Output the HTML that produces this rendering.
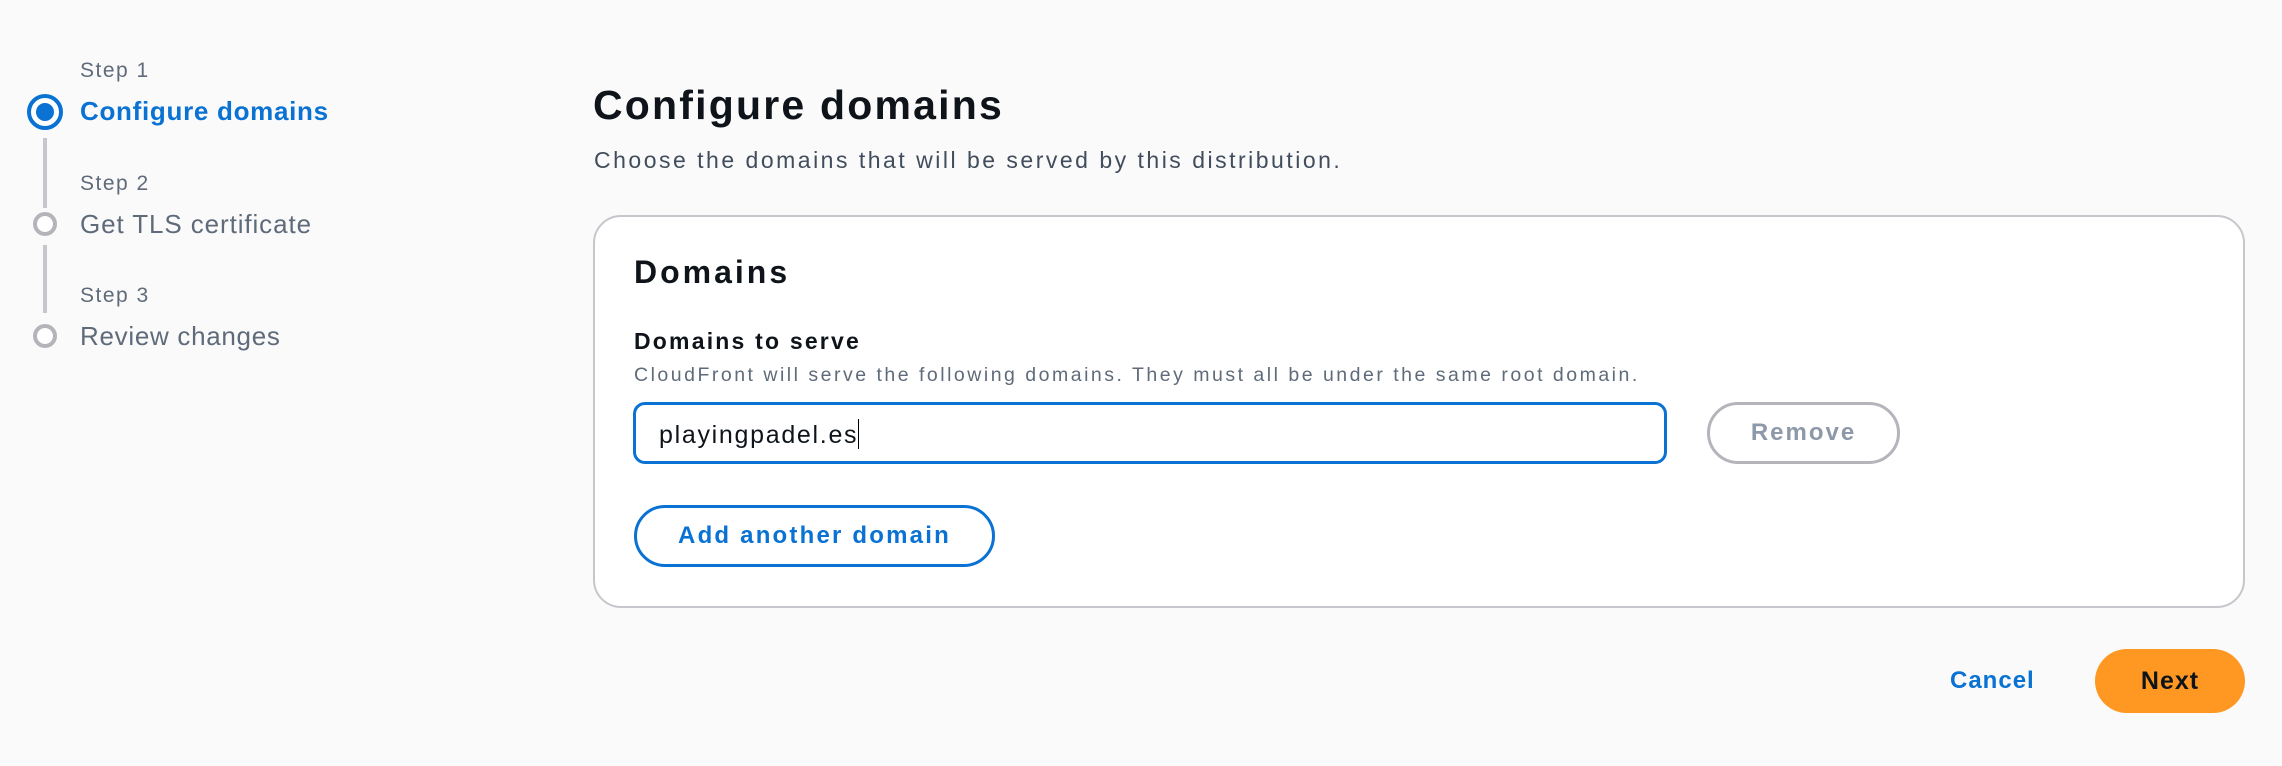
<!DOCTYPE html>
<html><head><meta charset="utf-8"><style>
*{box-sizing:border-box;margin:0;padding:0}
body{width:2282px;height:766px;background:#fafafa;font-family:"Liberation Sans",sans-serif;position:relative;overflow:hidden;color:#0f141a}
.a{position:absolute;white-space:nowrap}
.step{color:#5f6b7a;font-size:21px;left:80px;letter-spacing:1.5px}
.lbl{left:80px;font-size:26px;color:#5f6b7a;letter-spacing:0.8px}
.line{position:absolute;left:43px;width:4px;background:#c6c6cd}
.circ{position:absolute;border-radius:50%;border:4px solid #b4b4bb;width:24px;height:24px;left:33px;background:#fff}
</style></head><body>
<div class="a step" style="top:59px">Step 1</div>
<div class="a lbl" style="top:96px;color:#0972d3;font-weight:bold;letter-spacing:0.7px">Configure domains</div>
<div style="position:absolute;left:27px;top:94px;width:36px;height:36px;border:4px solid #0972d3;border-radius:50%;background:#fff"></div>
<div style="position:absolute;left:36px;top:103px;width:18px;height:18px;border-radius:50%;background:#0972d3"></div>
<div class="line" style="top:138px;height:70px"></div>
<div class="a step" style="top:172px">Step 2</div>
<div class="a lbl" style="top:209px;letter-spacing:0.9px">Get TLS certificate</div>
<div class="circ" style="top:212px"></div>
<div class="line" style="top:245px;height:68px"></div>
<div class="a step" style="top:284px">Step 3</div>
<div class="a lbl" style="top:321px;letter-spacing:0.7px">Review changes</div>
<div class="circ" style="top:324px"></div>

<div class="a" style="left:593px;top:82px;font-size:41px;font-weight:bold;letter-spacing:2.2px">Configure domains</div>
<div class="a" style="left:594px;top:147px;font-size:23px;color:#414d5c;letter-spacing:2.5px">Choose the domains that will be served by this distribution.</div>

<div style="position:absolute;left:593px;top:215px;width:1652px;height:393px;background:#fff;border:2px solid #c6c6cd;border-radius:28px"></div>
<div class="a" style="left:634px;top:254px;font-size:32px;font-weight:bold;letter-spacing:3px">Domains</div>
<div class="a" style="left:634px;top:328px;font-size:23px;font-weight:bold;letter-spacing:2.2px">Domains to serve</div>
<div class="a" style="left:634px;top:364px;font-size:19.5px;color:#5f6b7a;letter-spacing:2.5px">CloudFront will serve the following domains. They must all be under the same root domain.</div>
<div style="position:absolute;left:633px;top:402px;width:1034px;height:62px;border:3px solid #0972d3;border-radius:12px;background:#fff"></div>
<div class="a" style="left:659px;top:419px;font-size:25px;letter-spacing:1.7px">playingpadel.es<span style="display:inline-block;width:1px;height:30px;background:#000;vertical-align:-6px"></span></div>
<div style="position:absolute;left:1707px;top:402px;width:193px;height:62px;border:3px solid #b4b4bb;border-radius:31px;text-align:center;line-height:56px;font-size:24px;font-weight:bold;color:#8d99a8;letter-spacing:2px">Remove</div>
<div style="position:absolute;left:634px;top:505px;width:361px;height:62px;border:3px solid #0972d3;border-radius:31px;text-align:center;line-height:56px;font-size:24px;font-weight:bold;color:#0972d3;letter-spacing:2.2px">Add another domain</div>

<div class="a" style="left:1950px;top:667px;font-size:24px;font-weight:bold;color:#0972d3;letter-spacing:1px">Cancel</div>
<div style="position:absolute;left:2095px;top:649px;width:150px;height:64px;border-radius:32px;background:#ff9823;text-align:center;line-height:64px;font-size:25px;font-weight:bold;color:#0f141a;letter-spacing:1px">Next</div>
</body></html>
